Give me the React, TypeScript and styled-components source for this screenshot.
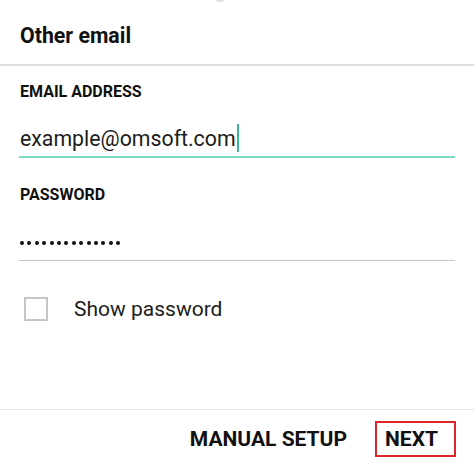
import React, { useState } from "react";
import styled, { createGlobalStyle } from "styled-components";

const GlobalStyle = createGlobalStyle`
  html, body {
    margin: 0;
    padding: 0;
    background: #ffffff;
  }
  body {
    font-family: Roboto, "Liberation Sans", Arial, sans-serif;
    color: #111111;
  }
  * {
    box-sizing: border-box;
  }
`;

const Screen = styled.div`
  position: relative;
  display: flex;
  flex-direction: column;
  width: 474px;
  height: 465px;
  overflow: hidden;
  background: #ffffff;
`;

// scrap of a status indicator peeking in at the top edge
const TopNub = styled.div`
  position: absolute;
  top: 0;
  left: 216px;
  width: 8px;
  height: 2px;
  border-radius: 0 0 3px 3px;
  background: #e2e2e2;
`;

const Header = styled.header`
  height: 66px;
  padding: 25px 0 0 20px;
  border-bottom: 2px solid #dedede;
`;

const Title = styled.h1`
  margin: 0;
  font-size: 21.3px;
  line-height: 22px;
  font-weight: 700;
  color: #111111;
`;

const Form = styled.div`
  flex: 1;
  display: flex;
  flex-direction: column;
  padding: 0 19px;
`;

const Label = styled.div<{ $top: number }>`
  margin-top: ${({ $top }) => $top}px;
  padding-left: 1px;
  font-size: 16px;
  line-height: 16px;
  font-weight: 700;
  color: #111111;
`;

const Field = styled.div<{ $active?: boolean }>`
  display: flex;
  align-items: flex-start;
  height: ${({ $active }) => ($active ? "34px" : "37px")};
  margin-top: ${({ $active }) => ($active ? "24px" : "21px")};
  padding-left: 1px;
  border-bottom: ${({ $active }) => ($active ? "2px solid #7fdac6" : "1px solid #c6c6c6")};
`;

const Value = styled.span`
  margin-top: 4px;
  font-size: 21.3px;
  line-height: 21px;
  color: #1c1c1c;
`;

const Cursor = styled.span`
  width: 2px;
  height: 28px;
  margin-left: 1px;
  background: #3cb8a0;
`;

const Dots = styled.span`
  align-self: center;
  display: flex;
  gap: 3.4px;
  margin-top: 1px;
`;

const Dot = styled.span`
  width: 4px;
  height: 4px;
  border-radius: 50%;
  background: #111111;
`;

const CheckRow = styled.label`
  display: flex;
  align-items: center;
  gap: 26px;
  margin-top: 36px;
  padding-left: 5px;
  cursor: pointer;
`;

const Box = styled.span<{ $checked: boolean }>`
  width: 24px;
  height: 24px;
  border: 2px solid #c6c6c6;
  background: ${({ $checked }) => ($checked ? "#7fdac6" : "#ffffff")};
`;

const CheckText = styled.span`
  font-size: 21px;
  line-height: 21px;
  color: #1c1c1c;
`;

const Footer = styled.footer`
  display: flex;
  justify-content: flex-end;
  align-items: flex-start;
  gap: 28px;
  height: 56px;
  padding: 11px 18px 0 0;
  border-top: 1px solid #e2e2e2;
`;

const ActionButton = styled.button<{ $outlined?: boolean }>`
  height: 36px;
  margin: 0;
  padding: ${({ $outlined }) => ($outlined ? "0 16px 0 8px" : "0")};
  border: ${({ $outlined }) => ($outlined ? "2px solid #e0262b" : "none")};
  background: transparent;
  font-family: Roboto, "Liberation Sans", Arial, sans-serif;
  font-size: 21px;
  font-weight: 700;
  color: #111111;
  cursor: pointer;
`;

const App = () => {
  const [showPassword, setShowPassword] = useState(false);
  const password = "omsoft-secret1";

  return (
    <Screen>
      <GlobalStyle />
      <TopNub />
      <Header>
        <Title>Other email</Title>
      </Header>
      <Form>
        <Label $top={18}>EMAIL ADDRESS</Label>
        <Field $active>
          <Value>example@omsoft.com</Value>
          <Cursor />
        </Field>
        <Label $top={29}>PASSWORD</Label>
        <Field>
          {showPassword ? (
            <Value>{password}</Value>
          ) : (
            <Dots>
              {password.split("").map((_, i) => (
                <Dot key={i} />
              ))}
            </Dots>
          )}
        </Field>
        <CheckRow onClick={() => setShowPassword(!showPassword)}>
          <Box $checked={showPassword} />
          <CheckText>Show password</CheckText>
        </CheckRow>
      </Form>
      <Footer>
        <ActionButton>MANUAL SETUP</ActionButton>
        <ActionButton $outlined>NEXT</ActionButton>
      </Footer>
    </Screen>
  );
};

export default App;
